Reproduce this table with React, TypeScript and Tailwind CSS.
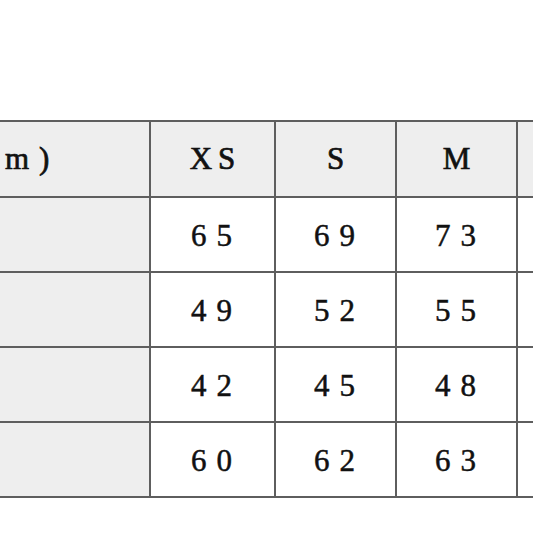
import React from "react";

const cols = ["XS", "S", "M", ""];
const rows = [
  ["65", "69", "73", ""],
  ["49", "52", "55", ""],
  ["42", "45", "48", ""],
  ["60", "62", "63", ""],
];

const widths = ["w-[201px]", "w-[125px]", "w-[121px]", "w-[121px]", "w-[120px]"];

export default function App() {
  return (
    <div
      className="w-[533px] h-[533px] overflow-hidden bg-white"
      style={{ fontFamily: '"Liberation Serif", "Times New Roman", serif' }}
    >
      <div className="pt-[120px] -ml-[50px] w-[700px]">
        <div className="border-t-2 border-[#5e5e5e]">
          <div className="flex h-[76px]">
            <div className={`${widths[0]} shrink-0 bg-[#eeeeee] border-r-2 border-b-2 border-[#5e5e5e] flex items-center pl-[55px] text-[31px] font-normal [-webkit-text-stroke:0.7px_#111] tracking-[10px] text-[#111]`}>
              m)
            </div>
            {cols.map((c, i) => (
              <div
                key={i}
                className={`${widths[i + 1]} shrink-0 bg-[#eeeeee] border-r-2 border-b-2 border-[#5e5e5e] flex items-center justify-center text-[31px] font-normal [-webkit-text-stroke:0.7px_#111] tracking-[6px] text-[#111] pl-[6px]`}
              >
                {c}
              </div>
            ))}
          </div>
          {rows.map((r, ri) => (
            <div key={ri} className="flex h-[75px]">
              <div className={`${widths[0]} shrink-0 bg-[#eeeeee] border-r-2 border-b-2 border-[#5e5e5e]`} />
              {r.map((v, i) => (
                <div
                  key={i}
                  className={`${widths[i + 1]} shrink-0 bg-white border-r-2 border-b-2 border-[#5e5e5e] flex items-center justify-center text-[31px] font-normal [-webkit-text-stroke:0.5px_#111] tracking-[10px] text-[#111] pl-[8px] pt-[3px]`}
                >
                  {v}
                </div>
              ))}
            </div>
          ))}
        </div>
      </div>
    </div>
  );
}
